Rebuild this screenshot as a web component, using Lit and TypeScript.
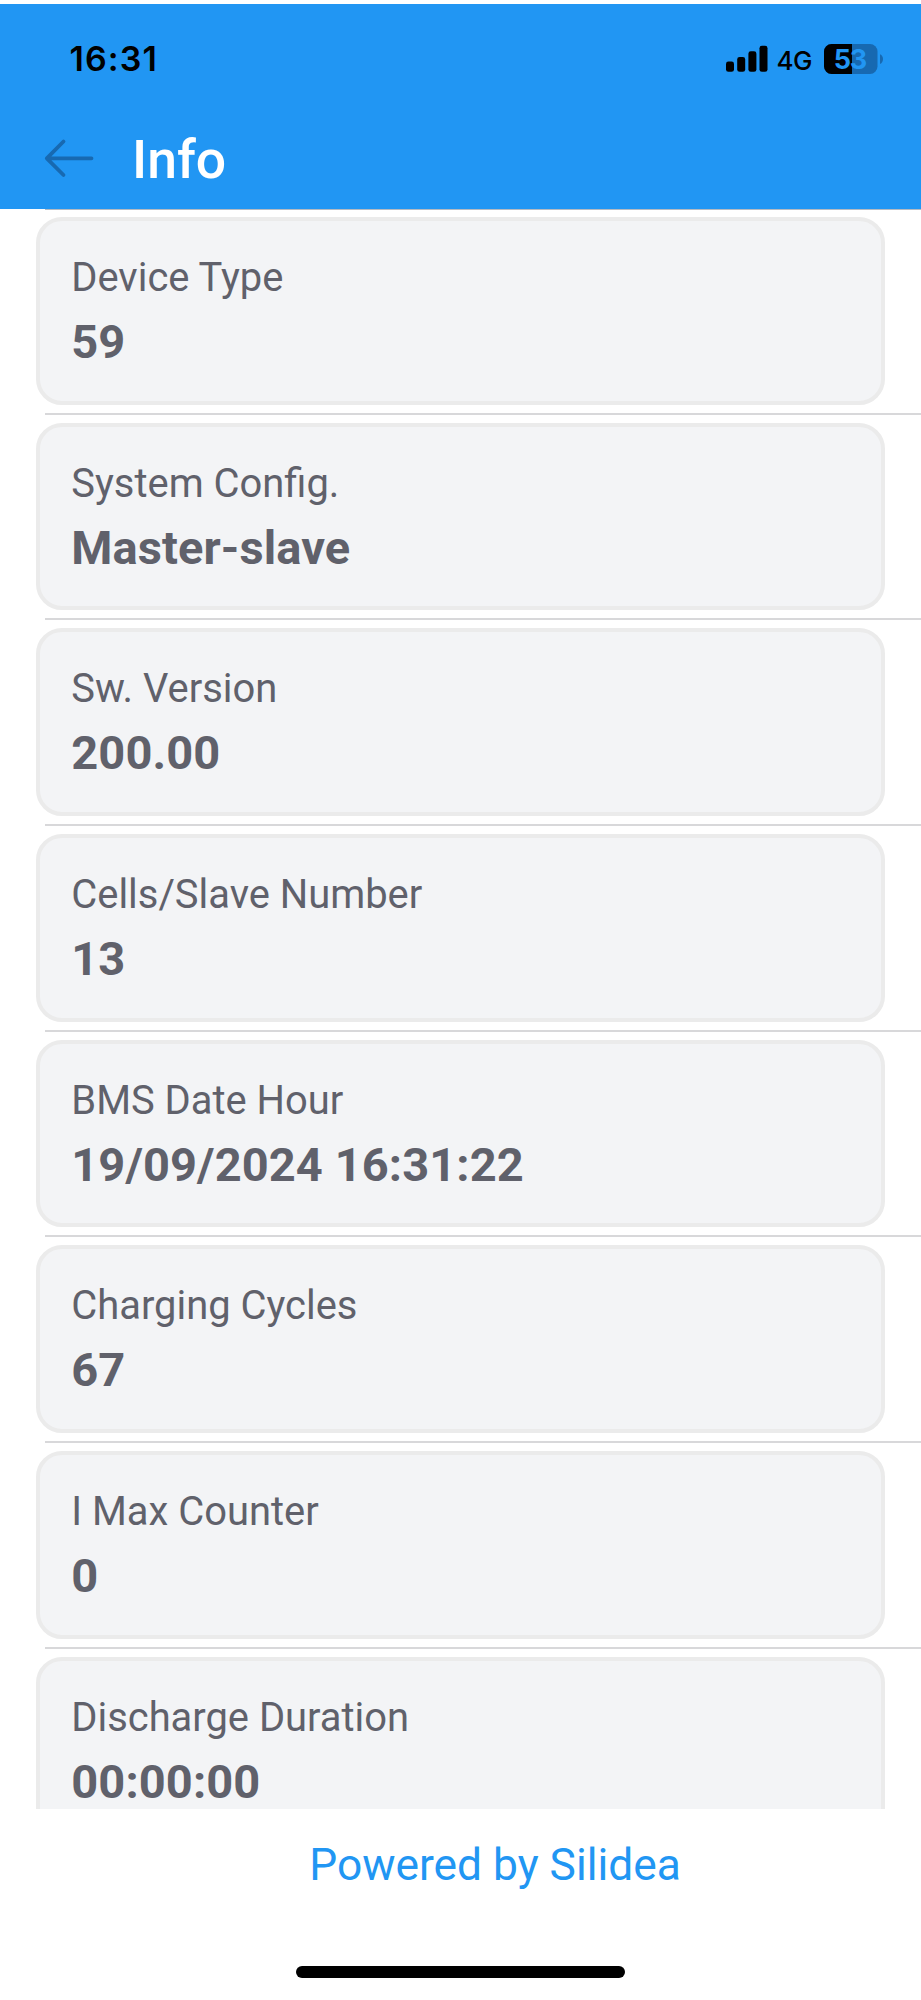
import { LitElement, html, css } from "lit";
import { customElement, property } from "lit/decorators.js";

@customElement("status-bar")
class StatusBar extends LitElement {
  static styles = css`
    :host { display: flex; height: 108px; color: #000; font-family: Inter, "Liberation Sans", sans-serif; }
    .time { margin-left: 69.5px; padding-top: 34px; font-size: 34px; font-weight: 600; line-height: 41px; letter-spacing: 1.1px; flex: 1; }
    .icons { display: block; width: 221px; height: 80px; margin-top: 16px; }
    .net { font-size: 26px; font-weight: 500; }
    .pct { font-size: 27px; font-weight: 700; fill: #2196f3; }
    .dim { fill: #1769b1; }
  `;
  render() {
    return html`
      <div class="time">16:31</div>
      <svg class="icons" viewBox="0 0 221 80">
        <rect x="26" y="41.5" width="8" height="10.3" rx="2.4" />
        <rect x="37.2" y="37.1" width="8" height="14.7" rx="2.4" />
        <rect x="48.4" y="31.3" width="8" height="20.5" rx="2.4" />
        <rect x="59.5" y="25.8" width="8" height="26" rx="2.4" />
        <text class="net" x="76.5" y="49.6" textLength="36">4G</text>
        <rect class="dim" x="124" y="24" width="53.5" height="30" rx="7.5" />
        <path d="M152 24V54H131.5A7.5 7.5 0 0 1 124 46.5V31.5A7.5 7.5 0 0 1 131.5 24Z" />
        <path class="dim" d="M180 34.3C184 35.8 184 42.5 180 44Z" />
        <text class="pct" x="133.8" y="48.9" textLength="33.5">53</text>
      </svg>
    `;
  }
}

@customElement("info-row")
class InfoRow extends LitElement {
  @property() label = "";
  @property() value = "";
  static styles = css`
    :host { display: block; flex: none; height: 205.66px; box-sizing: border-box; padding: 8.5px 36px 0; }
    .card { box-sizing: border-box; width: 849px; height: 187.8px; border: 4px solid #ebebeb; border-radius: 26px; background: #f3f4f6; padding: 33px 31.3px 0; color: #60616b; }
    .label { font-size: 39.9px; line-height: 48px; white-space: nowrap; }
    .value { margin-top: 12px; font-size: 47px; line-height: 56px; font-weight: 700; letter-spacing: 0.1px; white-space: nowrap; }
    .line { height: 2px; margin: 7.8px -36px 0 9px; background: #d8d8da; }
  `;
  render() {
    return html`
      <div class="card">
        <div class="label">${this.label}</div>
        <div class="value">${this.value}</div>
      </div>
      <div class="line"></div>
    `;
  }
}

@customElement("app-root")
class AppRoot extends LitElement {
  static styles = css`
    :host { display: flex; flex-direction: column; height: 2000px; box-sizing: border-box; padding-top: 3.5px; background: #fff; font-family: Roboto, "Liberation Sans", sans-serif; overflow: hidden; }
    .header { flex: none; height: 205px; background: #2196f3; }
    .nav { display: flex; align-items: flex-start; }
    .back { display: block; width: 52px; height: 40px; margin: 26px 0 0 42.5px; }
    .title { margin: 16px 0 0 37.5px; color: #fff; font-size: 53.5px; font-weight: 500; line-height: 64px; }
    .edge { flex: none; height: 1px; margin-left: 45px; background: #b4bac2; }
    .list { flex: none; height: 1600.5px; overflow: hidden; display: flex; flex-direction: column; margin-top: -1px; }
    .footer { flex: 1; display: flex; flex-direction: column; align-items: center; }
    .powered { margin: 29px 0 0 69px; font-size: 44.3px; line-height: 54px; color: #2196f3; white-space: nowrap; }
    .home { width: 329px; height: 11.5px; border-radius: 6px; background: #000; margin-top: 74.3px; }
  `;
  rows = [
    ["Device Type", "59"],
    ["System Config.", "Master-slave"],
    ["Sw. Version", "200.00"],
    ["Cells/Slave Number", "13"],
    ["BMS Date Hour", "19/09/2024 16:31:22"],
    ["Charging Cycles", "67"],
    ["I Max Counter", "0"],
    ["Discharge Duration", "00:00:00"],
  ];
  render() {
    return html`
      <div class="header">
        <status-bar></status-bar>
        <div class="nav">
          <svg class="back" viewBox="0 0 52 40" fill="none" stroke="#1769b1" stroke-width="3.8" stroke-linecap="round" stroke-linejoin="round">
            <path d="M48.5 20.3H4M20.5 3.5L3.8 20.3L20.5 37" />
          </svg>
          <div class="title">Info</div>
        </div>
      </div>
      <div class="edge"></div>
      <div class="list">
        ${this.rows.map(([l, v]) => html`<info-row .label=${l} .value=${v}></info-row>`)}
      </div>
      <div class="footer">
        <div class="powered">Powered by Silidea</div>
        <div class="home"></div>
      </div>
    `;
  }
}
